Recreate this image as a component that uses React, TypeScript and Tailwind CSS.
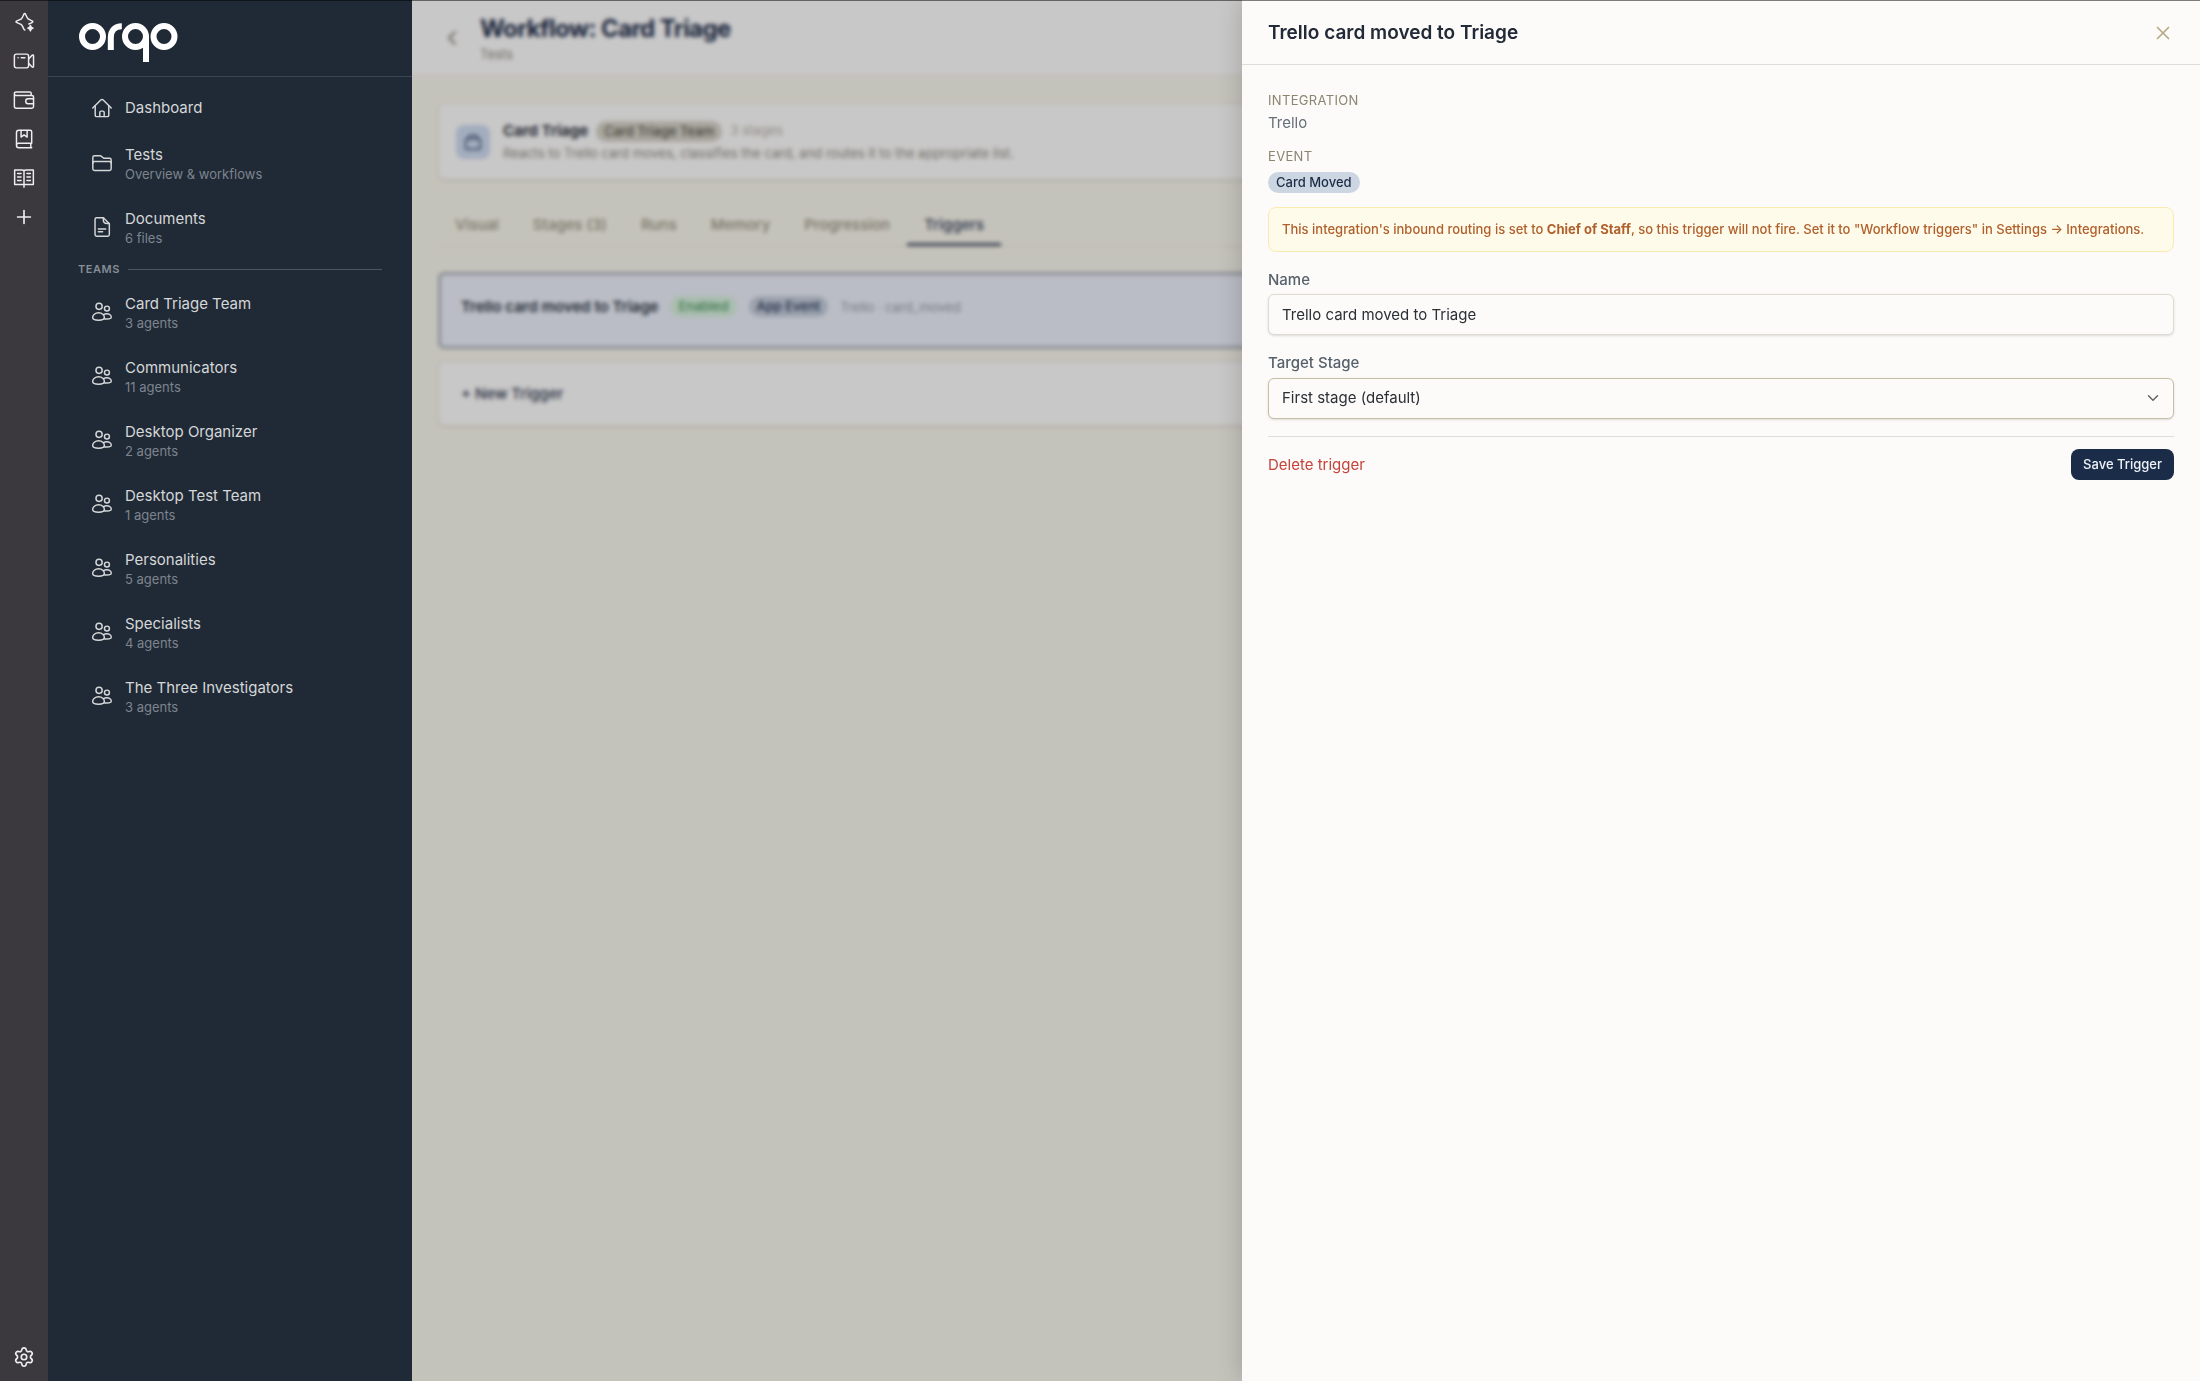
import type { ReactNode } from "react";
import { ChevronDown, ChevronLeft, Plus, Settings, X } from "lucide-react";

type NavItem = { name: string; detail?: string; icon: ReactNode };

function Icon({ children }: { children: ReactNode }) {
  return (
    <svg
      viewBox="0 0 24 24"
      className="size-[22px] shrink-0"
      fill="none"
      stroke="currentColor"
      strokeWidth="1.6"
      strokeLinecap="round"
      strokeLinejoin="round"
      aria-hidden="true"
    >
      {children}
    </svg>
  );
}

const homeIcon = (
  <Icon>
    <path d="M1.9 12 10.7 3.2a1.8 1.8 0 0 1 2.6 0L22.1 12" />
    <path d="M4.6 9.6v10.2c0 .9.7 1.6 1.6 1.6h11.6c.9 0 1.6-.7 1.6-1.6V9.6" />
    <path d="M9.6 21.2v-4.4c0-.8.6-1.4 1.4-1.4h2c.8 0 1.4.6 1.4 1.4v4.4" />
  </Icon>
);

const folderIcon = (
  <Icon>
    <path d="M2 18.4V5.9c0-1 .8-1.8 1.8-1.8h6c.7 0 1.3.3 1.8.8l1.2 1.2c.5.5 1 .7 1.7.7h5.7c1 0 1.8.8 1.8 1.8v9.8c0 1-.8 1.8-1.8 1.8H3.8c-1 0-1.8-.8-1.8-1.8Z" />
    <path d="M2 12.2c0-1 .8-1.8 1.8-1.8h16.4c1 0 1.8.8 1.8 1.8" />
  </Icon>
);

const fileIcon = (
  <Icon>
    <path d="M13.6 2H6.2c-1 0-1.8.8-1.8 1.8v16.4c0 1 .8 1.8 1.8 1.8h12c1 0 1.8-.8 1.8-1.8V8.4Z" />
    <path d="M13.4 2.2v1.6c0 2.5 1.4 4.4 4 4.4H20" />
    <path d="M8 14.2h8M8 17.2h4.6" />
  </Icon>
);

const teamIcon = (
  <Icon>
    <circle cx="8.8" cy="5.8" r="3.4" />
    <circle cx="17.4" cy="8.3" r="2.7" />
    <path d="M8.3 12.8c-3.8 0-6.5 2.5-6.5 5.2 0 1.9 1.6 2.9 6.5 2.9s6.3-1 6.3-2.9c0-2.7-2.5-5.2-6.3-5.2Z" />
    <path d="M13.8 14.9c.9-.6 2-.9 3.3-.9 3 0 5 1.8 5 3.7 0 1.3-1.2 1.9-4.6 1.9-1.2 0-2.3 0-3.2-.3" />
  </Icon>
);

const rail: Array<{ label: string; icon: ReactNode }> = [
  {
    label: "Assistant",
    icon: (
      <Icon>
        <path d="M17.3 14.2c1.6-.6 3-1.2 3.7-1.7.8-.5.8-1.1 0-1.6-1.2-.8-3.4-1.6-4.5-2.3-1.2-.8-2-3.2-2.7-4.8-.6-1.4-1.4-1.4-2-.1-.8 1.7-1.6 4.1-2.7 4.9-1.1.8-3.5 1.5-4.9 2.2-1.3.6-1.3 1.2 0 1.8 1.4.7 3.8 1.4 4.9 2.2 1.1.8 1.900 3.2 2.7 4.9.3.8.8 1.1 1.2 1" />
        <path
          d="M19 15.8c.3 1.9 1 2.6 2.9 2.9-1.9.3-2.6 1-2.9 2.9-.3-1.9-1-2.6-2.9-2.9 1.9-.3 2.6-1 2.900-2.900Z"
          fill="currentColor"
        />
      </Icon>
    ),
  },
  {
    label: "Meetings",
    icon: (
      <Icon>
        <rect x="1.5" y="4.5" width="15.5" height="15" rx="2.2" />
        <path d="m17.2 9.6 3.700-4c.5-.5 1.500-.2 1.500.5v12c0 .7-1 1-1.500.5l-3.700-4" />
        <path d="M5.500 8.400h.1M9 8.400h4" />
      </Icon>
    ),
  },
  {
    label: "Wallet",
    icon: (
      <Icon>
        <path d="M19.800 7V4.700c0-.8-.7-1.500-1.500-1.500H3.500c-1.100 0-2 .8-2 1.800v14.100c0 1 .9 1.900 2 1.900h17.100c1 0 1.800-.8 1.800-1.800V8.800C22.400 7.800 21.600 7 20.600 7H3.500c-1.100 0-2-.8-2-1.800" />
        <path d="M22.400 10.600h-6c-1.400 0-2.500 1.200-2.500 2.800s1.100 2.800 2.500 2.800h6" />
      </Icon>
    ),
  },
  {
    label: "Bookmarks",
    icon: (
      <Icon>
        <path d="M20.400 16.600V4.200c0-1-.7-1.700-1.700-1.700H6.300c-1.600 0-2.500.9-2.500 2.500v14.200c0 1.300.9 2.300 2.300 2.300h14.300M3.800 19c0-1.400.9-2.400 2.300-2.400h14.300M19.400 16.800v4.500" />
        <path d="M8.800 2.700v7.200l3.300-2.300 3.300 2.300V2.700" />
      </Icon>
    ),
  },
  {
    label: "Library",
    icon: (
      <Icon>
        <path d="M12 22V3.400M12 19H1.800V3.200h8c1.200 0 2.200.5 2.200 1.500 0-1 1-1.500 2.200-1.500h8V19H12" />
        <path d="M5 7.200h3.800M5 11h3.800M5 14.800h3.800M15.200 7.200H19M15.200 11H19M15.200 14.800H19" />
      </Icon>
    ),
  },
  { label: "Add", icon: <Plus className="size-[22px]" strokeWidth={1.8} /> },
];

const pages: NavItem[] = [
  { name: "Dashboard", icon: homeIcon },
  { name: "Tests", detail: "Overview & workflows", icon: folderIcon },
  { name: "Documents", detail: "6 files", icon: fileIcon },
];

const teams: NavItem[] = [
  { name: "Card Triage Team", detail: "3 agents", icon: teamIcon },
  { name: "Communicators", detail: "11 agents", icon: teamIcon },
  { name: "Desktop Organizer", detail: "2 agents", icon: teamIcon },
  { name: "Desktop Test Team", detail: "1 agents", icon: teamIcon },
  { name: "Personalities", detail: "5 agents", icon: teamIcon },
  { name: "Specialists", detail: "4 agents", icon: teamIcon },
  { name: "The Three Investigators", detail: "3 agents", icon: teamIcon },
];

const tabs = ["Visual", "Stages (3)", "Runs", "Memory", "Progression", "Triggers"];

function Logo() {
  return (
    <svg
      viewBox="0 0 99 39"
      className="h-[39px] w-[99px]"
      fill="none"
      stroke="#ffffff"
      strokeWidth="6"
      role="img"
      aria-label="orqo"
    >
      <circle cx="13.5" cy="13.5" r="10.5" />
      <path d="M31.8 27V14.5c0-7 4-11.200 11-11.200" />
      <circle cx="56.5" cy="13.5" r="10.5" />
      <path d="M67 13.5V39" />
      <circle cx="85" cy="13.5" r="10.5" />
    </svg>
  );
}

function NavLink({ item }: { item: NavItem }) {
  return (
    <a
      href="#"
      className={`flex items-center gap-3 pl-[43px] text-[#d5d7d8] ${item.detail ? "h-16" : "h-[47px]"}`}
    >
      {item.icon}
      <span className="flex flex-col">
        <span className="text-[15px] leading-[22px]">{item.name}</span>
        {item.detail && (
          <span className="text-[13px] leading-4 text-[#7d848e]">{item.detail}</span>
        )}
      </span>
    </a>
  );
}

function Sidebar() {
  return (
    <aside className="w-[364px] shrink-0 bg-[#202a36]">
      <div className="flex h-[77px] items-start border-b border-[#3b4552] pt-[23px] pl-[31px]">
        <Logo />
      </div>
      <nav className="pt-[7px]">
        {pages.map((item) => (
          <NavLink key={item.name} item={item} />
        ))}
        <div className="flex h-5 items-center gap-2 pr-[30px] pl-[30px]">
          <h2 className="text-[11px] font-semibold tracking-wider text-[#868d95]">TEAMS</h2>
          <div className="h-px flex-1 bg-[#4d565f]" />
        </div>
        <div className="pt-px">
          {teams.map((item) => (
            <NavLink key={item.name} item={item} />
          ))}
        </div>
      </nav>
    </aside>
  );
}

function Workflow() {
  return (
    <main className="relative min-w-0 flex-1 overflow-hidden bg-[#f6f4ea]">
      <header className="flex h-[76px] items-center gap-4 border-b border-[#e9e7df] bg-[#fbfafa] pl-7">
        <button type="button" aria-label="Back" className="text-[#85827a]">
          <ChevronLeft className="size-6" />
        </button>
        <div className="pt-[3px]">
          <h1 className="text-2xl leading-[30px] font-bold tracking-tight text-[#1b2a47]">
            Workflow: Card Triage
          </h1>
          <p className="text-[13px] leading-5 text-[#8a867c]">Tests</p>
        </div>
      </header>

      <div className="px-[26px] pt-[27px]">
        <section className="flex h-[77px] items-center gap-[13px] rounded-md border border-[#e7e5dd] bg-[#fbfafa] px-[17px] shadow-sm">
          <div className="flex size-[34px] items-center justify-center rounded-lg bg-[#ccd9ee] text-[#33486d]">
            <Icon>
              <path d="M4 10.500c0-1.100.9-2 2-2h12c1.100 0 2 .9 2 2V18c0 1.100-.9 2-2 2H6c-1.100 0-2-.9-2-2Z" />
              <path d="M6.500 8.500 8 5h8l1.500 3.500" />
            </Icon>
          </div>
          <div className="pt-px">
            <div className="flex items-center gap-2">
              <h2 className="text-[15px] leading-[22px] font-bold text-[#2c323c]">Card Triage</h2>
              <span className="rounded-full bg-[#d3d0c6] px-2 text-[13px] leading-[21px] font-medium text-[#55534b]">
                Card Triage Team
              </span>
              <span className="text-[13px] text-[#b3afa4]">3 stages</span>
            </div>
            <p className="text-[13px] leading-[22px] text-[#8f8b82]">
              Reacts to Trello card moves, classifies the card, and routes it to the appropriate list.
            </p>
          </div>
        </section>

        <div role="tablist" className="mt-[22px] flex h-[45px] border-b border-[#e6e3da]">
          {tabs.map((tab) => (
            <button
              key={tab}
              type="button"
              role="tab"
              aria-selected={tab === "Triggers"}
              className={`px-[17px] text-[15px] font-medium ${
                tab === "Triggers"
                  ? "border-b-3 border-[#4a5468] pt-[5px] text-[#35415c]"
                  : "pt-0.5 text-[#9a9182]"
              }`}
            >
              {tab}
            </button>
          ))}
        </div>

        <section className="mt-[25px] flex h-[77px] items-start gap-3 rounded-md border-3 border-[#aeb1bb] bg-[#e9edf7] px-5 pt-[21px]">
          <h3 className="text-[15px] leading-[22px] font-semibold text-[#2b3240]">
            Trello card moved to Triage
          </h3>
          <span className="rounded-full bg-[#d5eedb] px-2 text-[13px] leading-[21px] font-medium text-[#4c9a63]">
            Enabled
          </span>
          <span className="rounded-full bg-[#c3cbd9] px-2 text-[13px] leading-[21px] font-medium text-[#1f3354]">
            App Event
          </span>
          <span className="text-[13px] leading-[22px] text-[#969aa3]">Trello · card_moved</span>
        </section>

        <section className="mt-3 flex h-[65px] items-center rounded-md border border-[#e7e5dd] bg-[#fbfafa] px-[22px] pt-0.5 shadow-sm">
          <button type="button" className="text-[15px] font-medium text-[#2e3950]">
            + New Trigger
          </button>
        </section>
      </div>

      {/* dims the page while the drawer is open */}
      <div className="absolute inset-0 bg-black/20 backdrop-blur-[2px]" />
    </main>
  );
}

function TriggerDrawer() {
  return (
    <div
      role="dialog"
      aria-labelledby="drawer-title"
      className="fixed inset-y-0 right-0 w-[958px] max-w-full bg-[#fcfbf9] shadow-[0_0_24px_rgba(0,0,0,0.2)]"
    >
      <header className="flex h-[65px] items-center justify-between border-b border-[#dfded9] px-[26px] pt-0.5">
        <h2 id="drawer-title" className="text-[19px] leading-7 font-semibold text-[#222a37]">
          Trello card moved to Triage
        </h2>
        <button type="button" aria-label="Close" className="text-[#b5a983]">
          <X className="size-[22px]" strokeWidth={1.8} />
        </button>
      </header>

      <form className="px-[26px] pt-[26px]" onSubmit={(e) => e.preventDefault()}>
        <dl>
          <dt className="text-[13px] leading-[18px] tracking-wide text-[#8b8570]">INTEGRATION</dt>
          <dd className="mt-[3px] text-[15px] leading-[22px] text-[#66707a]">Trello</dd>
          <dt className="mt-[13px] text-[13px] leading-[18px] tracking-wide text-[#8b8570]">EVENT</dt>
          <dd className="mt-[7px] flex">
            <span className="rounded-full bg-[#ccd5e2] px-2 text-[13px] leading-[21px] font-medium text-[#1d2c46]">
              Card Moved
            </span>
          </dd>
        </dl>

        <p className="mt-[14px] rounded-lg border border-[#fbeab0] bg-[#fffbea] px-[13px] py-3 text-[13px] leading-[19px] font-medium text-[#b0602c]">
          This integration's inbound routing is set to <strong className="font-bold">Chief of Staff</strong>,
          so this trigger will not fire. Set it to "Workflow triggers" in Settings → Integrations.
        </p>

        <label htmlFor="name" className="mt-[17px] block text-[15px] leading-[22px] font-medium text-[#56616c]">
          Name
        </label>
        <input
          id="name"
          defaultValue="Trello card moved to Triage"
          className="mt-[3px] h-[41px] w-full rounded-md border border-[#dedcd0] bg-[#fcfbf9] px-[13px] text-[15px] text-[#2b2f36] shadow-sm"
        />

        <label htmlFor="stage" className="mt-[17px] block text-[15px] leading-[22px] font-medium text-[#56616c]">
          Target Stage
        </label>
        <div className="relative mt-1">
          <select
            id="stage"
            className="h-[41px] w-full appearance-none rounded-md border border-[#c3c1a4] bg-[#fcfbf9] px-[13px] text-[15px] text-[#2b2f36] shadow-sm"
          >
            <option>First stage (default)</option>
          </select>
          <ChevronDown className="pointer-events-none absolute top-[11px] right-3 size-[18px] text-[#666666]" />
        </div>

        <div className="mt-[17px] flex items-center justify-between border-t border-[#dfded9] pt-3">
          <button type="button" className="text-[15px] leading-[22px] text-[#c4443c]">
            Delete trigger
          </button>
          <button
            type="submit"
            className="rounded-lg bg-[#1b2c49] px-3 text-[13px] leading-[31px] font-medium text-[#eef2f7]"
          >
            Save Trigger
          </button>
        </div>
      </form>
    </div>
  );
}

export default function App() {
  return (
    <div className="flex min-h-screen font-['Inter',sans-serif]">
      <nav className="flex w-12 shrink-0 flex-col items-center justify-between bg-[#3c393e] pt-[11px] pb-[13px] text-[#efedf0]">
        <div className="flex flex-col gap-[17px]">
          {rail.map((item) => (
            <button key={item.label} type="button" aria-label={item.label}>
              {item.icon}
            </button>
          ))}
        </div>
        <button type="button" aria-label="Settings">
          <Settings className="size-[22px]" strokeWidth={1.8} />
        </button>
      </nav>
      <Sidebar />
      <Workflow />
      <TriggerDrawer />
      <div className="fixed inset-x-0 top-0 h-px bg-black/50" />
    </div>
  );
}
